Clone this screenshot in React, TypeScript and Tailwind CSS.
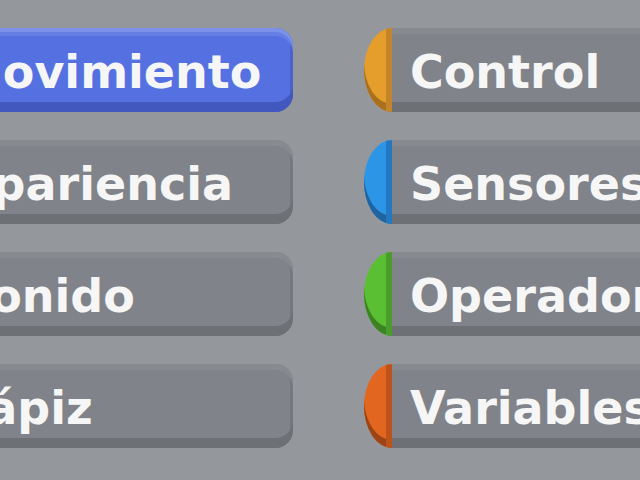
const LEFT = [
  { label: "Movimiento", active: true },
  { label: "Apariencia", active: false },
  { label: "Sonido", active: false },
  { label: "Lápiz", active: false },
];

const RIGHT = [
  { label: "Control", cap: "bg-[#e59d2c] shadow-[inset_-6px_0_0_#c4842a,inset_0_-8px_0_#a8701f]" },
  { label: "Sensores", cap: "bg-[#2c95e6] shadow-[inset_-6px_0_0_#2478c2,inset_0_-8px_0_#1f63a0]" },
  { label: "Operadores", cap: "bg-[#5bbf34] shadow-[inset_-6px_0_0_#4a9c2b,inset_0_-8px_0_#3d8223]" },
  { label: "Variables", cap: "bg-[#e2661f] shadow-[inset_-6px_0_0_#bd531a,inset_0_-8px_0_#9c4416]" },
];

const label = "pt-[21px] font-['DejaVu_Sans',sans-serif] font-bold text-[46px] leading-[46px] text-[#f6f6f6] whitespace-nowrap";

export default function App() {
  return (
    <div className="w-[640px] h-[480px] overflow-hidden bg-[#94989c] pt-[28px] flex">
      <div className="-ml-[70px] w-[363px] shrink-0 flex flex-col gap-[28px]">
        {LEFT.map((b) => (
          <div
            key={b.label}
            className={
              b.active
                ? "h-[84px] rounded-r-[18px] bg-[#5570e0] shadow-[inset_0_4px_0_#7c92ea,inset_0_8px_0_#667fe5,inset_0_-10px_0_#4358bf,inset_-3px_0_0_#4a62cc] pl-[27px]"
                : "h-[84px] rounded-r-[18px] bg-[#80848a] shadow-[inset_0_6px_0_#878b90,inset_0_-10px_0_#6d7176,inset_-3px_0_0_#75797e] pl-[27px]"
            }
          >
            <div className={label}>{b.label}</div>
          </div>
        ))}
      </div>
      <div className="ml-[71px] w-[360px] shrink-0 flex flex-col gap-[28px]">
        {RIGHT.map((b) => (
          <div key={b.label} className="h-[84px] flex">
            <div className={`w-[28px] shrink-0 rounded-l-[100%_50%] ${b.cap}`} />
            <div className="flex-1 bg-[#80848a] shadow-[inset_0_6px_0_#878b90,inset_0_-10px_0_#6d7176] pl-[18px]">
              <div className={label}>{b.label}</div>
            </div>
          </div>
        ))}
      </div>
    </div>
  );
}
